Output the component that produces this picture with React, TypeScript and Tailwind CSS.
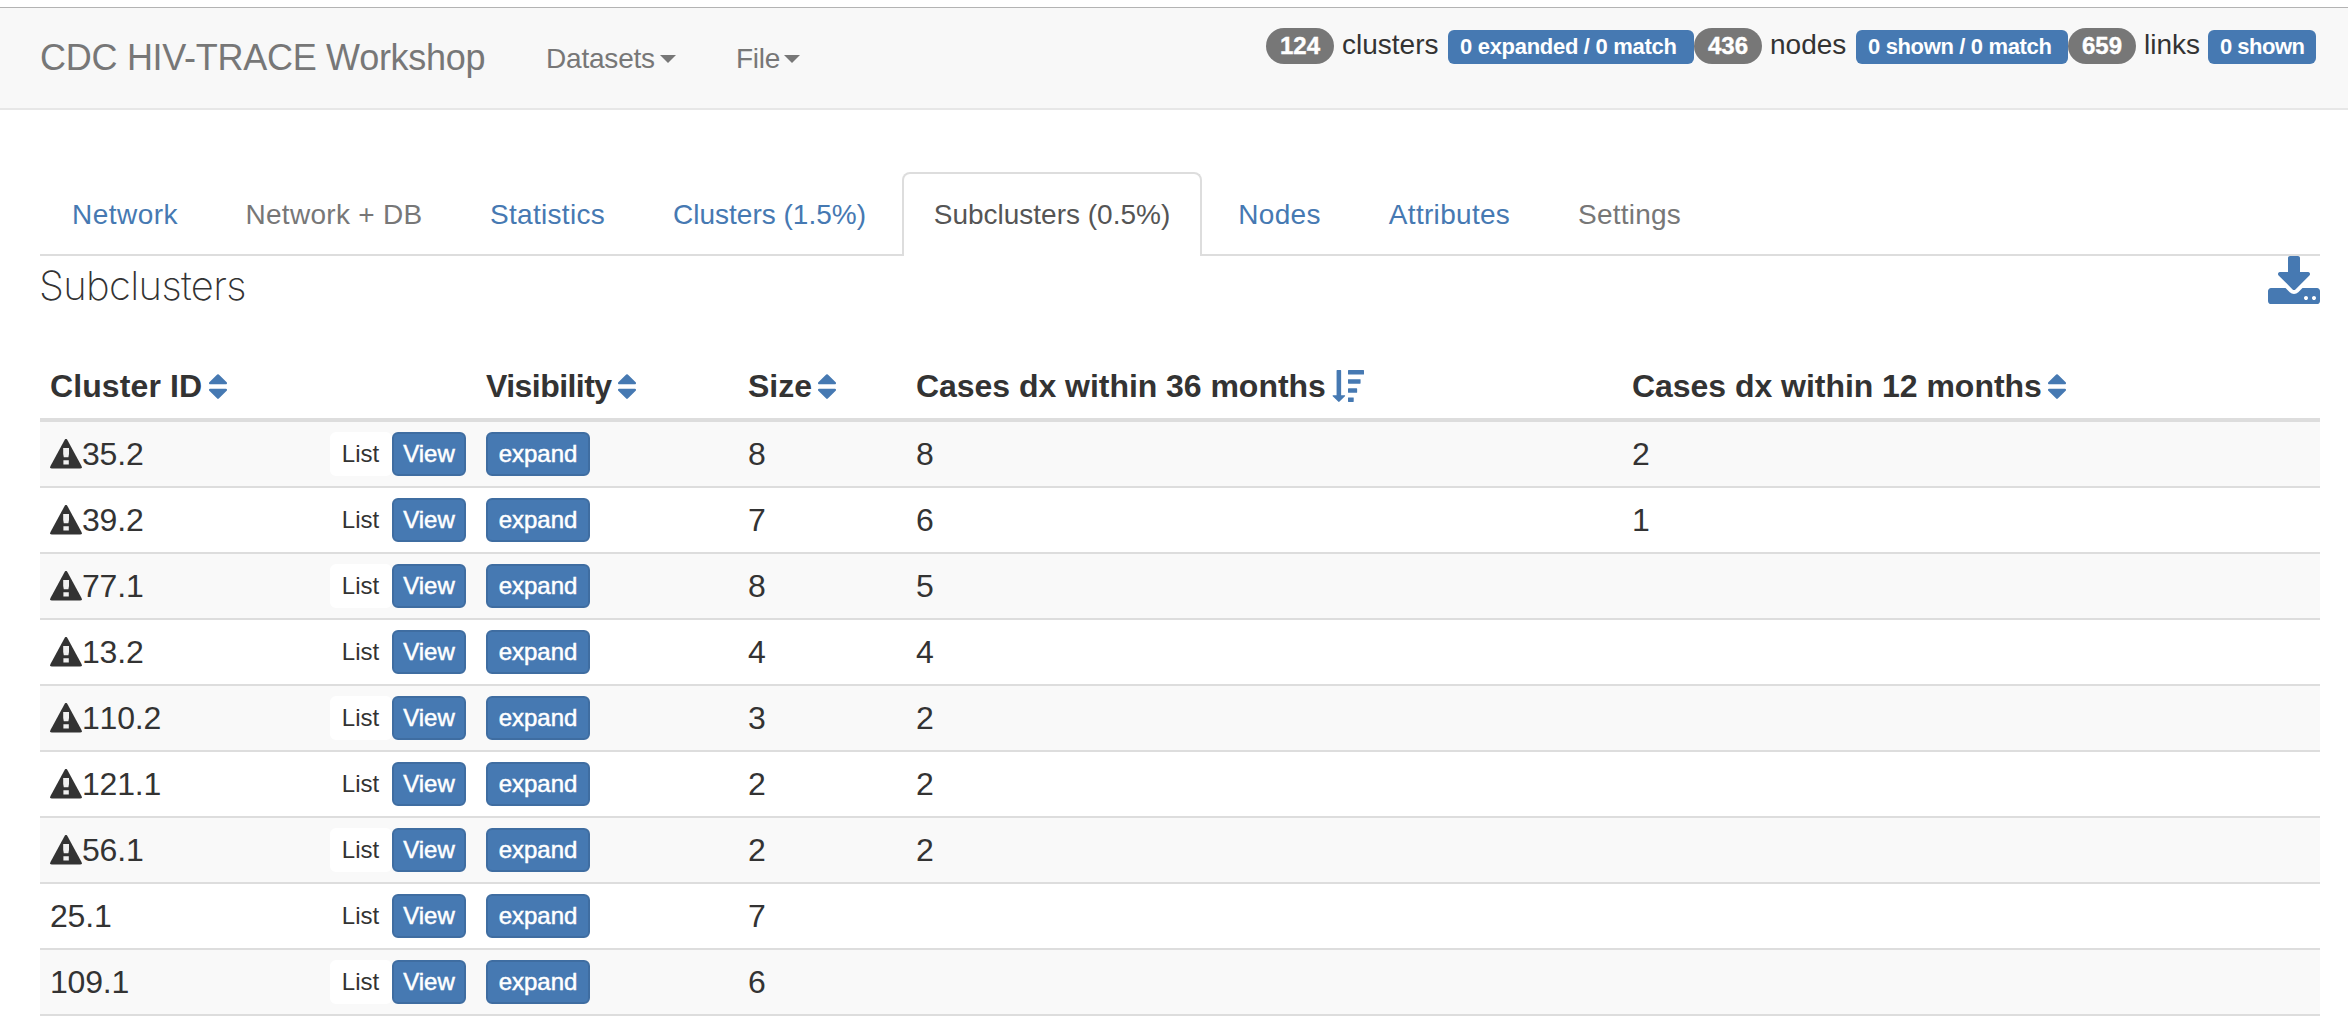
import React from "react";

const sans = "font-['Liberation_Sans',Arial,sans-serif]";

function SortIcon() {
  return (
    <svg viewBox="384 192 1024 1408" className="h-[25px] w-[18px] shrink-0" fill="#4679b2">
      <path d="M1408 1088q0 26-19 45l-448 448q-19 19-45 19t-45-19l-448-448q-19-19-19-45t19-45 45-19h896q26 0 45 19t19 45zm0-384q0 26-19 45t-45 19h-896q-26 0-45-19t-19-45 19-45l448-448q19-19 45-19t45 19l448 448q19 19 19 45z" />
    </svg>
  );
}

function SortDescIcon() {
  return (
    <svg viewBox="0 0 1792 1792" className="h-8 w-8 shrink-0" fill="#4679b2">
      <path d="M1216 1568v192q0 14-9 23t-23 9h-256q-14 0-23-9t-9-23v-192q0-14 9-23t23-9h256q14 0 23 9t9 23zm-480-128q0 12-10 24l-319 319q-10 9-23 9-12 0-23-9l-320-320q-15-16-7-35 8-20 30-20h192v-1376q0-14 9-23t23-9h192q14 0 23 9t9 23v1376h192q14 0 23 9t9 23zm672-384v192q0 14-9 23t-23 9h-448q-14 0-23-9t-9-23v-192q0-14 9-23t23-9h448q14 0 23 9t9 23zm192-512v192q0 14-9 23t-23 9h-640q-14 0-23-9t-9-23v-192q0-14 9-23t23-9h640q14 0 23 9t9 23zm192-512v192q0 14-9 23t-23 9h-832q-14 0-23-9t-9-23v-192q0-14 9-23t23-9h832q14 0 23 9t9 23z" />
    </svg>
  );
}

function DownloadIcon() {
  return (
    <svg viewBox="64 0 1664 1536" className="h-12 w-[52px]" fill="#4679b2">
      <path d="M1344 1344q0-26-19-45t-45-19-45 19-19 45 19 45 45 19 45-19 19-45zm256 0q0-26-19-45t-45-19-45 19-19 45 19 45 45 19 45-19 19-45zm128-224v320q0 40-28 68t-68 28h-1472q-40 0-68-28t-28-68v-320q0-40 28-68t68-28h465l135 136q58 56 136 56t136-56l136-136h464q40 0 68 28t28 68zm-325-569q17 41-14 70l-448 448q-18 19-45 19t-45-19l-448-448q-31-29-14-70 17-39 59-39h256v-448q0-26 19-45t45-19h256q26 0 45 19t19 45v448h256q42 0 59 39z" />
    </svg>
  );
}

function WarningIcon() {
  return (
    <svg viewBox="0 0 32 30" className="h-[30px] w-8 shrink-0">
      <path d="M14.6 1 Q16 -1.2 17.4 1 L31.5 27 Q32.600 29.600 30 29.600 L2 29.600 Q-.6 29.600 .5 27 Z" fill="#333" />
      <path d="M13.200 9h5.800v6l-.6 3.200h-4.600l-.6-3.200z M13.400 21.200h5.400v4.200h-5.400z" fill="#f0f0f0" />
    </svg>
  );
}

function Caret() {
  return (
    <svg viewBox="0 0 16 8" className="h-2 w-4 shrink-0" fill="#777">
      <path d="M0 0h16L8 8z" />
    </svg>
  );
}

const tabs = [
  { text: "Network", cls: "w-[170px] tracking-[0.45px] text-[#4679b2]" },
  { text: "Network + DB", cls: "w-[240px] tracking-[0.3px] text-[#777]" },
  { text: "Statistics", cls: "w-[179px] tracking-[0.3px] text-[#4679b2]" },
  { text: "Clusters (1.5%)", cls: "w-[257px] text-[#4679b2]" },
  { text: "Subclusters (0.5%)", cls: "w-[300px] text-[#555]", active: true },
  { text: "Nodes", cls: "w-[147px] tracking-[0.3px] text-[#4679b2]" },
  { text: "Attributes", cls: "w-[185px] tracking-[0.3px] text-[#4679b2]" },
  { text: "Settings", cls: "w-[167px] tracking-[0.2px] text-[#777]" },
];

const rows = [
  { id: "35.2", warn: true, size: 8, m36: 8, m12: 2 },
  { id: "39.2", warn: true, size: 7, m36: 6, m12: 1 },
  { id: "77.1", warn: true, size: 8, m36: 5 },
  { id: "13.2", warn: true, size: 4, m36: 4 },
  { id: "110.2", warn: true, size: 3, m36: 2 },
  { id: "121.1", warn: true, size: 2, m36: 2 },
  { id: "56.1", warn: true, size: 2, m36: 2 },
  { id: "25.1", size: 7 },
  { id: "109.1", size: 6 },
];

const cols = "grid grid-cols-[436px_262px_168px_716px_1fr]";
const head = "flex items-center pt-0.5 pl-2.5";
const primary =
  "h-11 rounded-md border-2 border-[#3f6da1] bg-[#4679b2] text-center text-2xl leading-10 text-white [-webkit-text-stroke:0.5px_white]";

function Badge({ children }: { children: React.ReactNode }) {
  return (
    <span className="flex h-9 w-[68px] items-center justify-center rounded-[20px] bg-[#777] text-2xl font-bold text-white [-webkit-text-stroke:0.4px_white]">
      {children}
    </span>
  );
}

function Label({ children, cls }: { children: React.ReactNode; cls: string }) {
  return (
    <span
      className={`mt-0.5 h-[34px] rounded-md bg-[#4679b2] pl-3 text-[22px] leading-[34px] font-bold text-white ${cls}`}
    >
      {children}
    </span>
  );
}

export default function App() {
  return (
    <div className={`h-[1022px] w-[2348px] overflow-hidden bg-white whitespace-nowrap text-[#333] ${sans}`}>
      <nav className="mt-[7px] flex h-[103px] border-t border-b-2 border-t-[#b3b3b3] border-b-[#e7e7e7] bg-[#f8f8f8] text-[#777]">
        <div className="ml-10 w-[506px] text-[36px] leading-[100px] tracking-[-0.28px]">CDC HIV-TRACE Workshop</div>
        <div className="flex w-[190px] items-center gap-[5px] pt-0.5 text-[28px]">
          <span className="tracking-[-0.2px]">Datasets</span>
          <Caret />
        </div>
        <div className="flex items-center gap-[4px] pt-0.5 text-[28px]">
          <span className="tracking-[-0.3px]">File</span>
          <Caret />
        </div>
        <div className="mt-5 mr-8 ml-auto flex text-[28px] leading-[34px] text-[#333]">
          <Badge>124</Badge>
          <span className="w-[114px] pl-2">clusters</span>
          <Label cls="w-[246px] tracking-[-0.3px]">0 expanded / 0 match</Label>
          <Badge>436</Badge>
          <span className="w-[94px] pl-2">nodes</span>
          <Label cls="w-[212px] tracking-[-0.35px]">0 shown / 0 match</Label>
          <Badge>659</Badge>
          <span className="w-[72px] pl-2">links</span>
          <Label cls="w-[108px] tracking-[-0.5px]">0 shown</Label>
        </div>
      </nav>

      <main className="mx-10 w-[2280px]">
        <ul className="mt-[62px] flex h-[84px] gap-1 border-b-2 border-[#ddd] text-[28px]">
          {tabs.map((t) => (
            <li
              key={t.text}
              className={`h-[84px] shrink-0 rounded-t-lg pt-[23px] text-center leading-10 ${t.cls} ${
                t.active ? "border-2 border-b-0 border-[#ddd] bg-white pt-[21px]!" : ""
              }`}
            >
              {t.text}
            </li>
          ))}
        </ul>

        <div className="flex h-[96px] items-start justify-between">
          <h2 className="-ml-px pt-[5px] font-[Inter,'Liberation_Sans',sans-serif] text-[40px] leading-[50px] font-extralight tracking-[-0.65px]">
            Subclusters
          </h2>
          <DownloadIcon />
        </div>

        <div className={`${cols} h-[70px] border-b-4 border-[#ddd] text-[32px] font-bold`}>
          <div className={`${head} gap-[7px]`}><span className="tracking-[0.1px]">Cluster ID</span><SortIcon /></div>
          <div className={`${head} gap-[6px]`}><span className="tracking-[-0.55px]">Visibility</span><SortIcon /></div>
          <div className={`${head} gap-[6px]`}><span>Size</span><SortIcon /></div>
          <div className={`${head} gap-[6px]`}><span className="tracking-[-0.04px]">Cases dx within 36 months</span><SortDescIcon /></div>
          <div className={`${head} gap-[6px]`}><span className="tracking-[-0.04px]">Cases dx within 12 months</span><SortIcon /></div>
        </div>

        {rows.map((r, i) => (
          <div
            key={r.id}
            className={`${cols} h-[66px] items-center border-b-2 border-[#ddd] text-[32px] leading-[64px] ${
              i % 2 === 0 ? "bg-[#f9f9f9]" : "bg-white"
            }`}
          >
            <div className="flex items-center pr-2.5 pl-2.5">
              {r.warn && <WarningIcon />}
              <span className="tracking-[-0.2px] [font-kerning:none]">{r.id}</span>
              <span className="ml-auto h-11 w-[62px] rounded-md bg-white pr-px text-center text-2xl leading-[44px]">List</span>
              <span className={`${primary} w-[74px]`}>View</span>
            </div>
            <div className="pl-2.5">
              <div className={`${primary} w-[104px]`}>expand</div>
            </div>
            <div className="pl-2.5">{r.size}</div>
            <div className="pl-2.5">{r.m36}</div>
            <div className="pl-2.5">{r.m12}</div>
          </div>
        ))}
      </main>
    </div>
  );
}
